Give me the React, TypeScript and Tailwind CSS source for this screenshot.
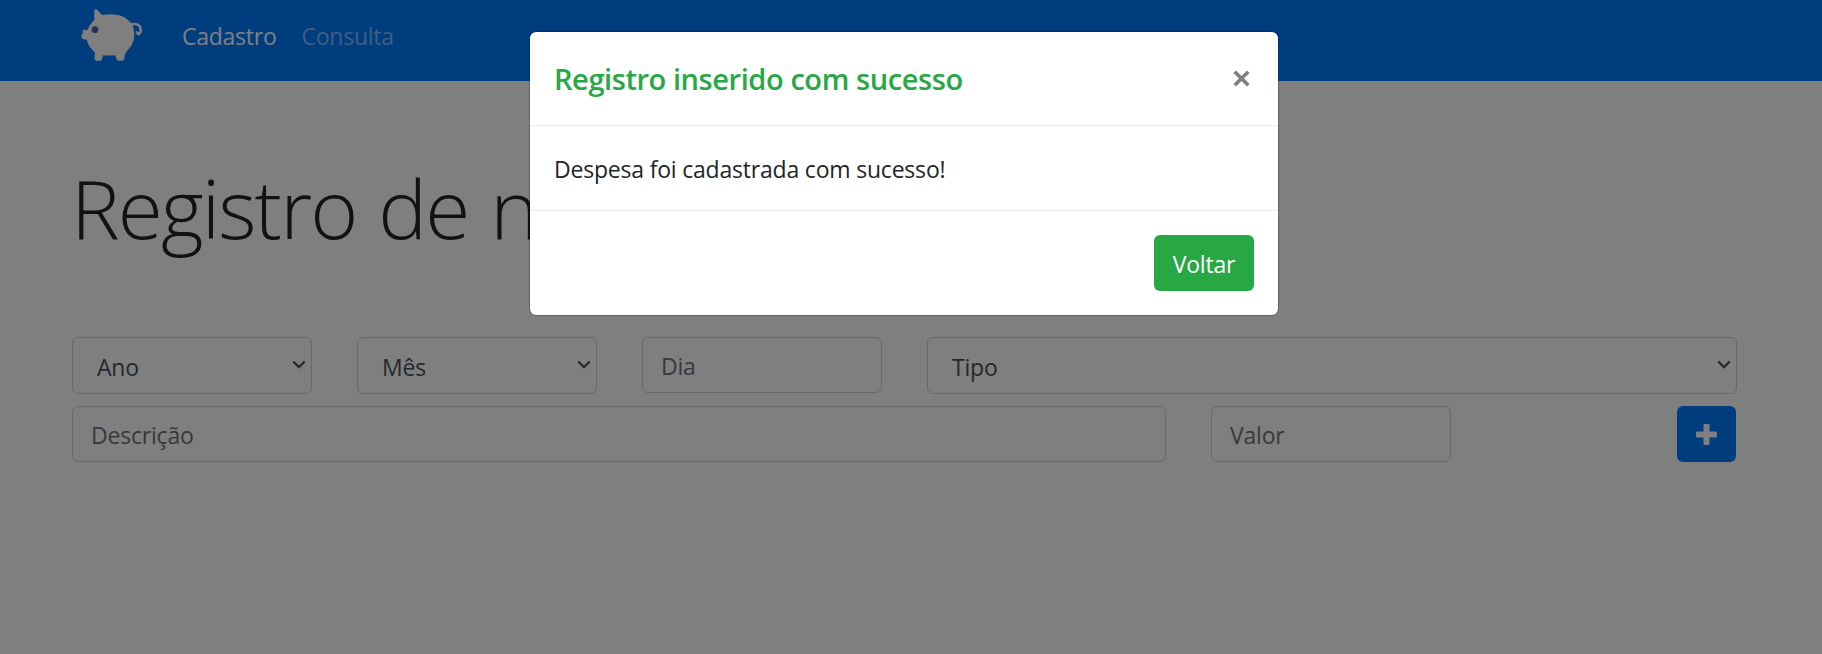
import type { ReactNode } from "react";

function PiggyBank() {
  return (
    <svg viewBox="0 0 186 159" className="h-[53px] w-[62px]" aria-hidden="true">
      <path
        fill="#fff"
        d="M40 2 Q45 -1 50 4 L63 18 Q74 16 90 16 Q124 17 141 33 Q146 38 151 42 Q159 55 160 78 Q159 103 145 118 Q133 130 131 139 L130 151 Q128 155 123 155 L111 155 Q107 153 106 148 L103 139 Q85 140 66 139 L63 150 Q62 155 57 155 L46 155 Q41 154 40 149 L42 132 Q33 122 25 112 Q21 103 17 92 L5 90 Q2 89 2 85 L1 80 L1 77 L5 75 L5 66 Q6 62 10 62 L20 63 Q24 49 40 32 Z"
      />
      <path
        d="M149 48 C162 41 177 46 179 60 C180 68 177 74 172 76 L168 70"
        fill="none"
        stroke="#fff"
        strokeWidth="7.5"
        strokeLinecap="round"
        strokeLinejoin="round"
      />
      <circle cx="42" cy="62" r="10" fill="#5563ac" />
    </svg>
  );
}

function Chevron() {
  return (
    <svg viewBox="0 0 14 9" className="mb-[2px] h-[9px] w-[14px] shrink-0" aria-hidden="true">
      <path d="M1.3 1.5 L7 7.2 L12.7 1.5" fill="none" stroke="#495057" strokeWidth="2.3" />
    </svg>
  );
}

function Select({ label, className }: { label: string; className: string }) {
  return (
    <div
      role="combobox"
      className={`flex h-[57px] items-center justify-between rounded-[6px] border border-[#ced4da] bg-white pr-[5px] pl-[24px] text-[#495057] ${className}`}
    >
      <span className="pt-[3px]">{label}</span>
      <Chevron />
    </div>
  );
}

function Field({ className, children }: { className: string; children: ReactNode }) {
  return (
    <div className={`flex h-[56px] items-center rounded-[6px] border border-[#ced4da] bg-white pt-[2px] pl-[18px] text-[#6c757d] ${className}`}>
      {children}
    </div>
  );
}

export default function App() {
  return (
    <div className="relative h-[654px] w-full overflow-hidden bg-white font-['Open_Sans','Noto_Sans',sans-serif] text-[23px] leading-[36px] tracking-[-0.2px] text-[#212529]">
      <nav className="flex h-[81px] items-start bg-[#007bff] pl-[81px]">
        <div className="pt-[9px]">
          <PiggyBank />
        </div>
        <div className="flex gap-[25px] pt-[18px] pl-[39px] tracking-[-0.25px]">
          <a className="text-white">Cadastro</a>
          <a className="text-white/50">Consulta</a>
        </div>
      </nav>

      <main className="px-[72px]">
        <h1 className="-ml-[1px] pt-[76px] text-[82px] leading-[100px] font-light tracking-[-1.9px] whitespace-nowrap [word-spacing:2.5px]">
          Registro de n
        </h1>
        <div className="mt-[80px] flex items-start">
          <Select label="Ano" className="w-[240px]" />
          <Select label="Mês" className="ml-[45px] w-[240px]" />
          <Field className="ml-[45px] w-[240px]">Dia</Field>
          <Select label="Tipo" className="ml-[45px] w-[810px]" />
        </div>
        <div className="mt-[12px] flex items-start">
          <Field className="w-[1094px]">Descrição</Field>
          <Field className="ml-[45px] w-[240px]">Valor</Field>
          <button className="ml-[226px] flex h-[56px] w-[59px] items-center justify-center rounded-[6px] bg-[#007bff]" aria-label="Adicionar">
            <svg viewBox="0 0 21 21" className="h-[21px] w-[21px]" aria-hidden="true">
              <path
                fill="#fff"
                d="M8.5 0 H12.5 Q13.5 0 13.5 1 V7.5 H20 Q21 7.5 21 8.5 V12.5 Q21 13.5 20 13.5 H13.5 V20 Q13.5 21 12.5 21 H8.5 Q7.5 21 7.5 20 V13.5 H1 Q0 13.5 0 12.5 V8.5 Q0 7.5 1 7.5 H7.5 V1 Q7.5 0 8.5 0 Z"
              />
            </svg>
          </button>
        </div>
      </main>

      <div className="absolute inset-0 flex items-start justify-center bg-black/50 pt-[31px] pr-[14px]">
        <div role="dialog" className="flex h-[285px] w-[750px] flex-col rounded-[7px] border border-black/20 bg-white bg-clip-padding">
          <div className="flex h-[94px] items-center justify-between border-b border-[#e9ecef] pr-[28px] pl-[24px]">
            <h5 className="text-[29px] leading-[45px] font-semibold tracking-[-0.42px] text-[#28a745]">
              Registro inserido com sucesso
            </h5>
            <svg viewBox="0 0 17 17" className="mb-[1px] h-[17px] w-[17px]" aria-label="Fechar">
              <path d="M1.7 1.7 L15.3 15.3 M15.3 1.7 L1.7 15.3" fill="none" stroke="#808080" strokeWidth="3.7" />
            </svg>
          </div>
          <div className="flex h-[84px] items-center pt-[1px] pl-[24px]">Despesa foi cadastrada com sucesso!</div>
          <div className="flex grow items-center justify-end border-t border-[#e9ecef] pr-[24px]">
            <button className="flex h-[56px] w-[100px] items-center justify-center rounded-[6px] bg-[#28a745] pt-[2px] text-white">
              Voltar
            </button>
          </div>
        </div>
      </div>
    </div>
  );
}
